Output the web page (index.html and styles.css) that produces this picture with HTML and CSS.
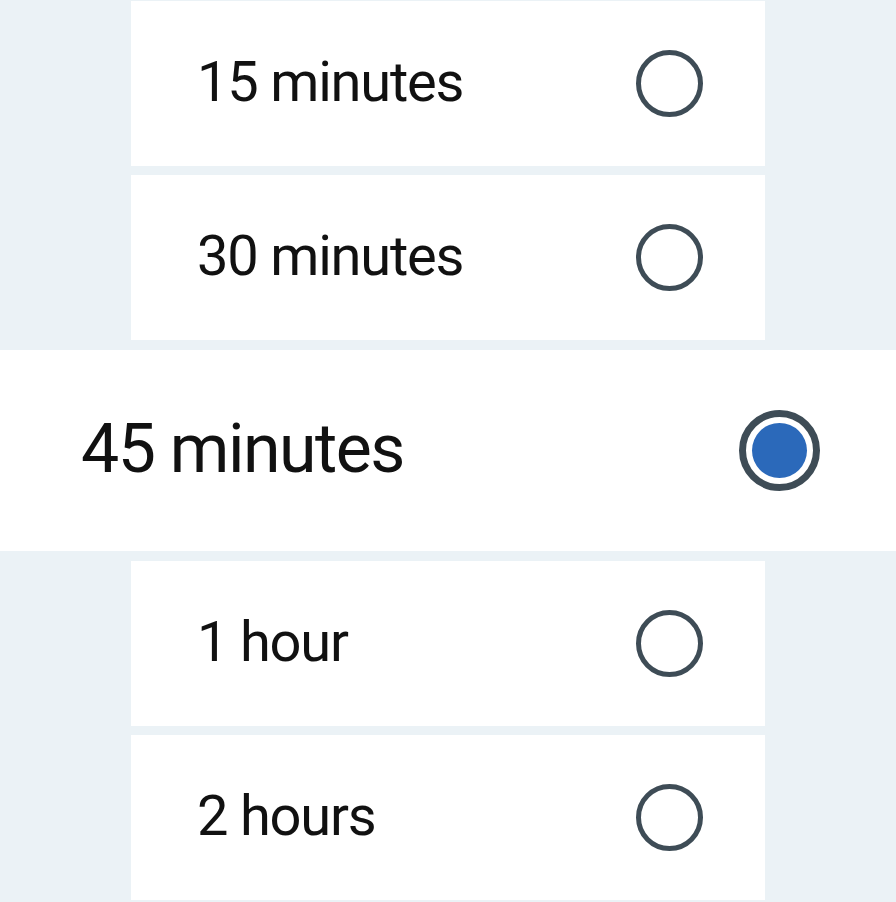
FILE: index.html
```html
<!DOCTYPE html>
<html lang="en">
<head>
<meta charset="utf-8">
<title>Duration</title>
<link rel="stylesheet" href="styles.css">
</head>
<body>
<ul class="options" role="radiogroup">
  <li class="option" role="radio" aria-checked="false">
    <span class="label">15 minutes</span>
    <span class="radio"></span>
  </li>
  <li class="option" role="radio" aria-checked="false">
    <span class="label">30 minutes</span>
    <span class="radio"></span>
  </li>
  <li class="option option--selected" role="radio" aria-checked="true">
    <span class="label">45 minutes</span>
    <span class="radio radio--checked"><span class="dot"></span></span>
  </li>
  <li class="option" role="radio" aria-checked="false">
    <span class="label">1 hour</span>
    <span class="radio"></span>
  </li>
  <li class="option" role="radio" aria-checked="false">
    <span class="label">2 hours</span>
    <span class="radio"></span>
  </li>
</ul>
</body>
</html>
```
FILE: styles.css
```css
* { box-sizing: border-box; }
html, body {
  margin: 0;
  padding: 0;
  background: #ebf2f6;
  overflow: hidden;
}
body {
  font-family: Roboto, "Liberation Sans", sans-serif;
  color: #111;
}
.options {
  list-style: none;
  margin: 0;
  padding: 1px 0 0;
  display: flex;
  flex-direction: column;
  align-items: center;
  gap: 9px;
}
.option {
  width: 634px;
  height: 165px;
  flex: none;
  background: #fff;
  display: flex;
  align-items: center;
  justify-content: space-between;
  padding: 0 62px 0 66px;
}
.label {
  font-size: 56px;
  letter-spacing: -1.2px;
  line-height: 1;
  margin-top: -4px;
}
.radio {
  width: 67px;
  height: 67px;
  border-radius: 50%;
  border: 5.5px solid #3e4c56;
  display: flex;
  align-items: center;
  justify-content: center;
}
.option--selected {
  width: 100%;
  height: 201px;
  margin: 1px 0;
  padding: 0 76px 0 81px;
}
.option--selected .label {
  font-size: 68px;
  letter-spacing: -1.5px;
  margin-top: -3px;
}
.radio--checked {
  width: 81px;
  height: 81px;
  border-width: 7px;
}
.dot {
  width: 55px;
  height: 55px;
  border-radius: 50%;
  background: #2b69ba;
}
```
